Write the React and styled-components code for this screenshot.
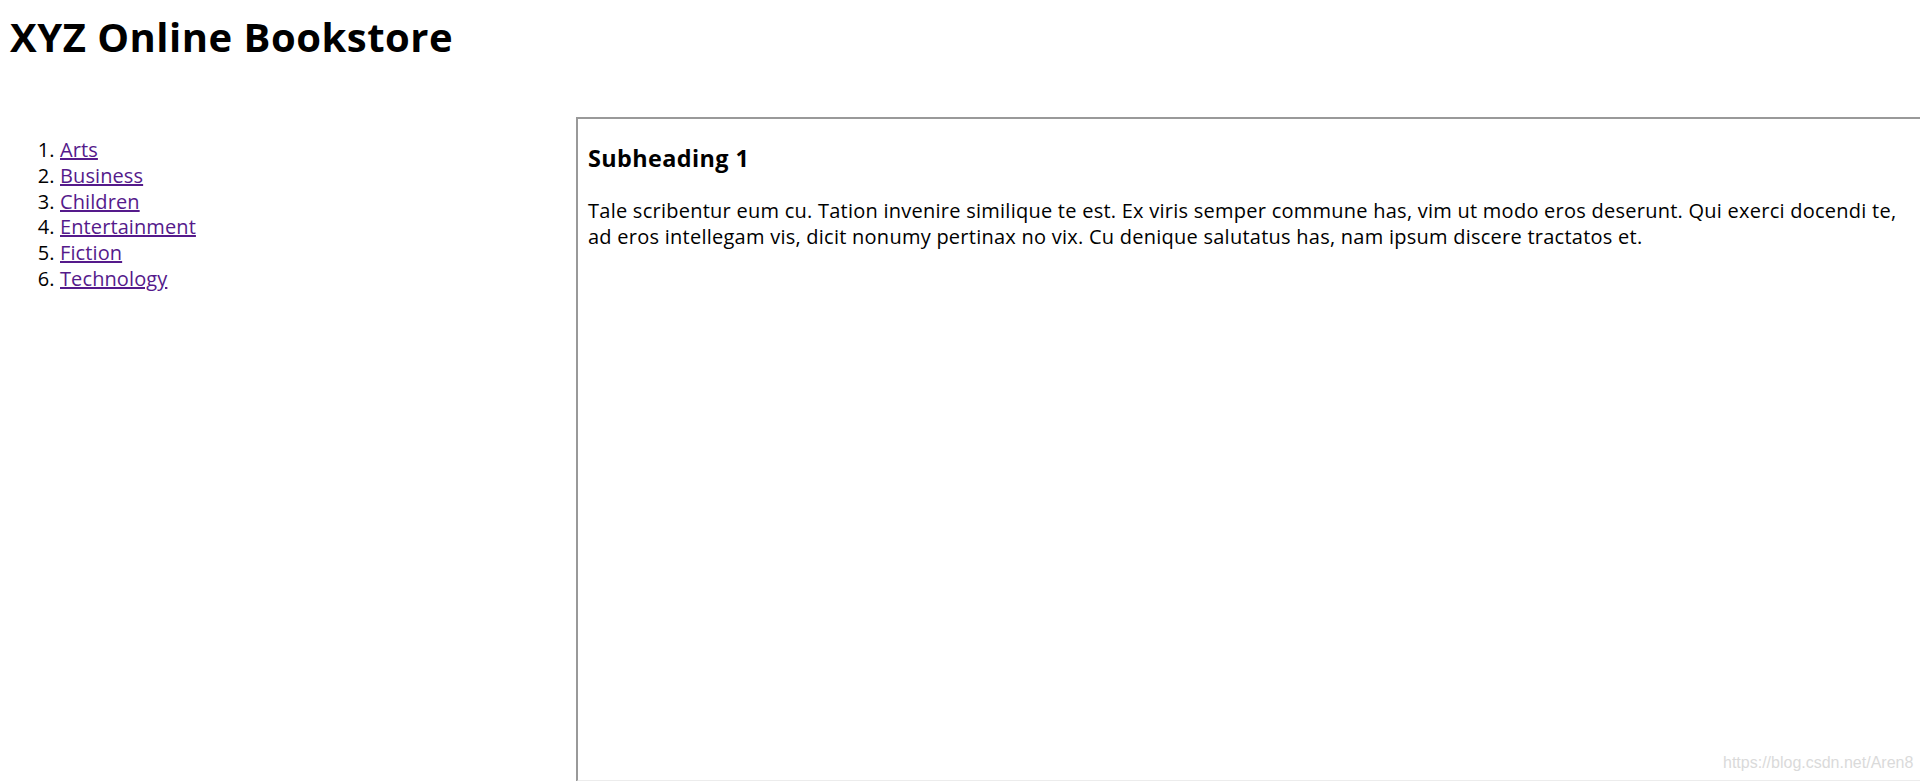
import React from "react";
import styled, { createGlobalStyle } from "styled-components";

const Global = createGlobalStyle`
  html, body { margin: 0; padding: 0; overflow: hidden; background: #fff; }
  body {
    padding: 10px;
    width: 1920px;
    height: 781px;
    box-sizing: border-box;
    font-family: "Open Sans", "Noto Sans", sans-serif;
    color: #000;
  }
`;

const Title = styled.h1`
  margin: 0 0 53px 0;
  font-size: 40px;
  line-height: 54px;
  font-weight: 700;
  letter-spacing: 0.5px;
`;

const Row = styled.div`
  display: flex;
  align-items: flex-start;
`;

const Nav = styled.nav`
  width: 566px;
  flex: none;
  padding-top: 20px;
`;

const List = styled.ol`
  margin: 0;
  padding-left: 50px;
  font-size: 20px;
  line-height: 25.8px;
  letter-spacing: 0.1px;
`;

const Link = styled.a`
  color: #551a8b;
  text-decoration: underline;
`;

const Frame = styled.section`
  position: relative;
  flex: none;
  width: 1356px;
  height: 665px;
  box-sizing: border-box;
  border-width: 2px;
  border-style: solid;
  border-color: #999 #ececec #ececec #999;
  padding: 24px 10px 0 10px;
`;

const Sub = styled.h3`
  margin: 0 0 24px 0;
  font-size: 23.4px;
  line-height: 31px;
  font-weight: 700;
  letter-spacing: 0.4px;
`;

const Para = styled.p`
  margin: 0;
  font-size: 20px;
  line-height: 25.6px;
  letter-spacing: 0.25px;
`;

const Watermark = styled.span`
  position: absolute;
  left: 1145px;
  bottom: 8px;
  font-family: "Liberation Sans", Arial, sans-serif;
  font-size: 16px;
  color: #dadada;
  white-space: nowrap;
`;

const items = ["Arts", "Business", "Children", "Entertainment", "Fiction", "Technology"];

export default function App() {
  return (
    <>
      <Global />
      <Title>XYZ Online Bookstore</Title>
      <Row>
        <Nav>
          <List>
            {items.map((t) => (
              <li key={t}>
                <Link href="#">{t}</Link>
              </li>
            ))}
          </List>
        </Nav>
        <Frame>
          <Sub>Subheading 1</Sub>
          <Para>
            Tale scribentur eum cu. Tation invenire similique te est. Ex viris semper commune has, vim ut modo eros
            deserunt. Qui exerci docendi te, ad eros intellegam vis, dicit nonumy pertinax no vix. Cu denique salutatus
            has, nam ipsum discere tractatos et.
          </Para>
          <Watermark>https://blog.csdn.net/Aren8</Watermark>
        </Frame>
      </Row>
    </>
  );
}
